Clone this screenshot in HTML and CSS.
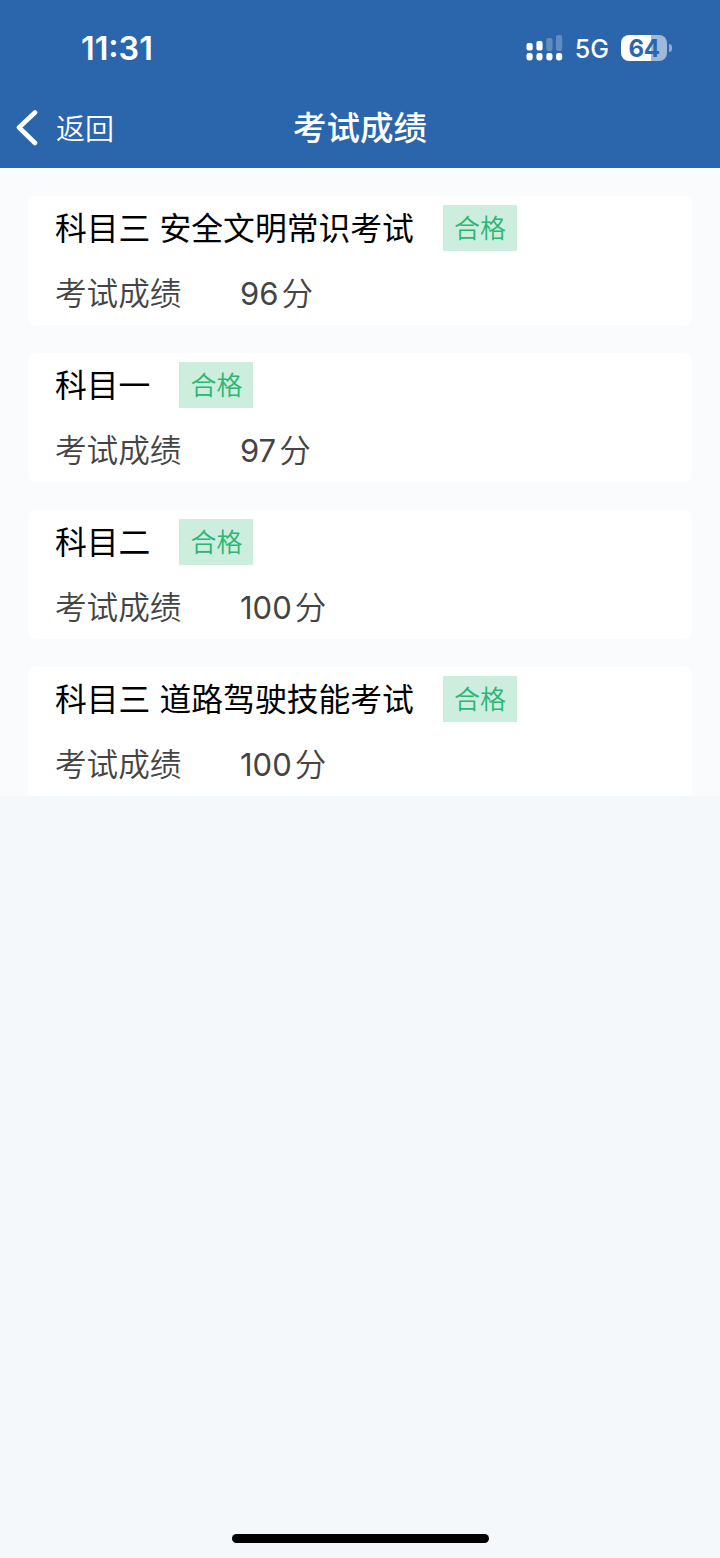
FILE: index.html
```html
<!DOCTYPE html>
<html lang="zh-CN">
<head>
<meta charset="utf-8">
<title>考试成绩</title>
<link rel="stylesheet" href="styles.css">
</head>
<body>
<div class="screen">
  <header class="header">
    <div class="status">
      <span class="time">11:31</span>
      <div class="indicators">
        <svg class="signal" width="37" height="26" viewBox="0 0 37 26" fill="#fff">
          <g opacity=".25"><rect x="20.3" y="3" width="6.2" height="13" rx="2"/><rect x="30" y="0" width="6.2" height="16" rx="2"/></g>
          <rect x="0.5" y="8" width="6.2" height="7.5" rx="2"/><rect x="10.4" y="6" width="6.2" height="9.5" rx="2"/>
          <rect x="0.5" y="18" width="6.2" height="7.5" rx="2.4"/><rect x="10.4" y="18" width="6.2" height="7.5" rx="2.4"/><rect x="20.3" y="18" width="6.2" height="7.5" rx="2.4"/><rect x="30" y="18" width="6.2" height="7.5" rx="2.4"/>
        </svg>
        <span class="network">5G</span>
        <div class="battery"><span class="level">64</span></div>
      </div>
    </div>
    <nav class="nav">
      <a class="back">
        <svg width="24" height="38" viewBox="0 0 24 38" fill="none" stroke="#fff" stroke-width="4.6" stroke-linecap="round" stroke-linejoin="round"><path d="M21 3.500 5 18.500l16 15.500"/></svg>
        <span class="back-label">返回</span>
      </a>
      <h1 class="title">考试成绩</h1>
      <span></span>
    </nav>
  </header>
  <main class="list">
    <section class="card">
      <div class="subject"><h2 class="name">科目三 安全文明常识考试</h2><span class="tag">合格</span></div>
      <div class="row"><span class="label">考试成绩</span><span class="score">96</span><span class="unit">分</span></div>
    </section>
    <section class="card">
      <div class="subject"><h2 class="name">科目一</h2><span class="tag">合格</span></div>
      <div class="row"><span class="label">考试成绩</span><span class="score">97</span><span class="unit">分</span></div>
    </section>
    <section class="card">
      <div class="subject"><h2 class="name">科目二</h2><span class="tag">合格</span></div>
      <div class="row"><span class="label">考试成绩</span><span class="score">100</span><span class="unit">分</span></div>
    </section>
    <section class="card">
      <div class="subject"><h2 class="name">科目三 道路驾驶技能考试</h2><span class="tag">合格</span></div>
      <div class="row"><span class="label">考试成绩</span><span class="score">100</span><span class="unit">分</span></div>
    </section>
  </main>
  <footer class="footer"><div class="home-bar"></div></footer>
</div>
</body>
</html>
```
FILE: styles.css
```css
* { box-sizing: border-box; }
body {
  margin: 0;
  background: #f4f8fa;
  color: #000;
  font-family: "Noto Sans CJK SC", sans-serif;
}
h1, h2 { margin: 0; }
.screen { display: flex; flex-direction: column; height: 1558px; }
.header { height: 168px; background: #2b65ab; color: #fff; }
.status {
  display: flex;
  align-items: center;
  justify-content: space-between;
  height: 88px;
  padding: 8px 48px 0 81px;
  font-family: Inter, sans-serif;
}
.time { padding-top: 1px; font-size: 32.3px; font-weight: 600; line-height: 40px; }
.indicators { display: flex; align-items: center; }
.network { margin-left: 12px; padding-top: 2px; font-size: 25px; font-weight: 500; line-height: 30px; }
.battery { display: flex; align-items: center; margin-left: 12px; }
.battery::after {
  content: "";
  width: 3px;
  height: 8px;
  margin-left: 2px;
  border-radius: 0 4px 4px 0;
  background: #8fabd2;
}
.level {
  width: 46px;
  height: 26px;
  border-radius: 8px;
  background: linear-gradient(90deg, #fff 30px, #a0b9da 30px);
  color: #2b65ab;
  font-size: 24px;
  font-weight: 650;
  line-height: 27px;
  text-align: center;
  letter-spacing: -0.5px;
}
.nav {
  display: grid;
  grid-template-columns: 1fr auto 1fr;
  align-items: center;
  height: 80px;
  padding: 0 14px;
}
.back { display: flex; align-items: center; gap: 18px; }
.back-label { padding-bottom: 2px; font-size: 29px; font-weight: 350; line-height: 38px; }
.title { padding-bottom: 4px; font-size: 33.5px; font-weight: 500; line-height: 44px; }
.list {
  display: flex;
  flex-direction: column;
  gap: 28px;
  padding: 28px 28px 0;
  background: #f9fbfc;
}
.card {
  height: 129px;
  padding: 9px 28px 0 27px;
  border-radius: 8px;
  background: #fff;
}
.subject { display: flex; align-items: center; height: 46px; gap: 29px; }
.name {
  padding-bottom: 3px;
  font-size: 31.8px;
  font-weight: 400;
  line-height: 43px;
  word-spacing: 2px;
}
.tag {
  width: 74px;
  height: 46px;
  background: #cdeedf;
  color: #2bb673;
  font-size: 26px;
  font-weight: 350;
  line-height: 44px;
  text-align: center;
}
.row {
  display: flex;
  align-items: center;
  height: 46px;
  margin-top: 19px;
  color: #444;
  font-size: 31.6px;
  font-weight: 350;
  line-height: 42px;
}
.label { width: 185px; padding-bottom: 4px; }
.score { padding-top: 1px; font-family: Inter, sans-serif; font-size: 31px; font-weight: 400; }
.unit { margin-left: 3px; padding-bottom: 4px; }
.footer { display: flex; justify-content: center; margin-top: auto; padding-bottom: 15px; }
.home-bar { width: 257px; height: 9px; border-radius: 5px; background: #000; }
```
